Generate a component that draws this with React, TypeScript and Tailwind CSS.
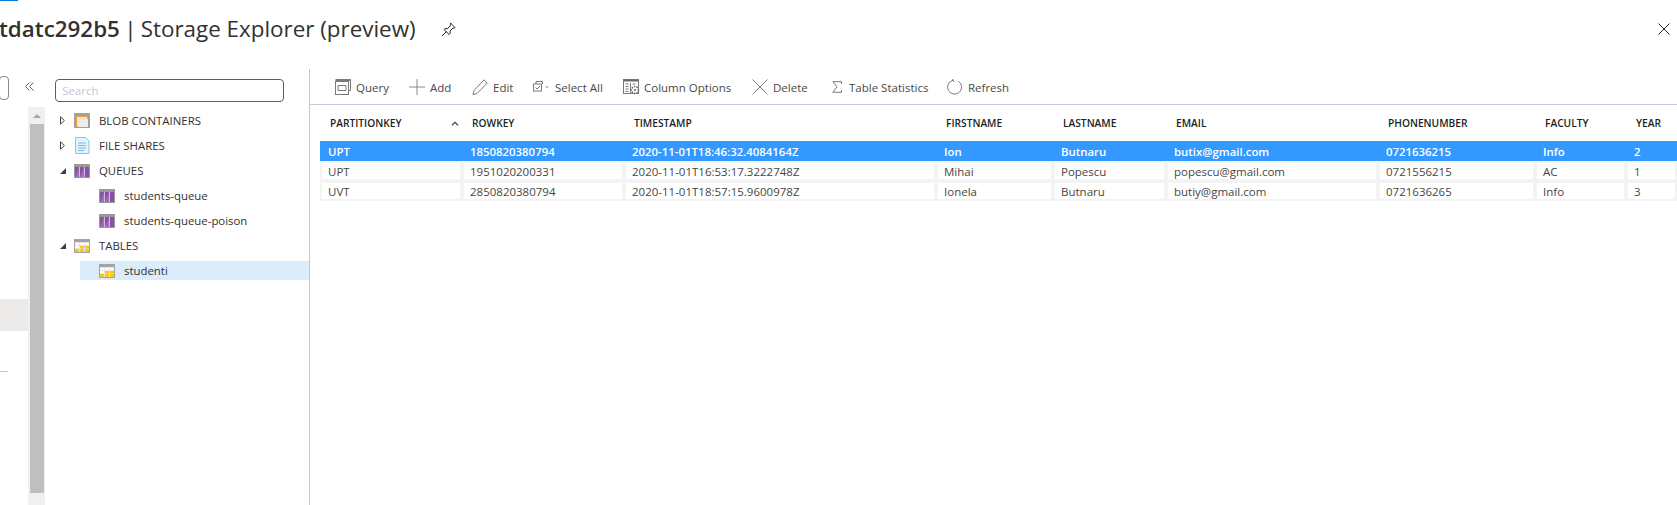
import React from 'react'

const font = "[font-family:'Open_Sans',sans-serif]"

const columns = [
  'PartitionKey',
  'RowKey',
  'Timestamp',
  'FirstName',
  'LastName',
  'Email',
  'PhoneNumber',
  'Faculty',
  'Year',
]

const rows = [
  ['UPT', '1850820380794', '2020-11-01T18:46:32.4084164Z', 'Ion', 'Butnaru', 'butix@gmail.com', '0721636215', 'Info', '2'],
  ['UPT', '1951020200331', '2020-11-01T16:53:17.3222748Z', 'Mihai', 'Popescu', 'popescu@gmail.com', '0721556215', 'AC', '1'],
  ['UVT', '2850820380794', '2020-11-01T18:57:15.9600978Z', 'Ionela', 'Butnaru', 'butiy@gmail.com', '0721636265', 'Info', '3'],
]

const gridCols = 'grid-cols-[142px_162px_312px_117px_113px_212px_157px_91px_51px]'

const BlobIcon = () => (
  <svg width="16" height="16" viewBox="0 0 16 16">
    <rect x="0" y="0" width="16" height="15" fill="#a0a0a0" />
    <rect x="2" y="3" width="12" height="11" fill="#f2a23a" />
    <rect x="3" y="4" width="10" height="9" fill="#fbe3bf" />
    <rect x="4" y="6" width="10" height="8" fill="#ececec" />
  </svg>
)

const FileIcon = () => (
  <svg width="16" height="17" viewBox="0 0 16 17">
    <path d="M1.5.5h10l3.5 3.5v12.5H1.5z" fill="#e3f3fb" stroke="#7fcbea" />
    <path d="M4 6h8M4 8.5h8M4 11h8M4 13.5h6" stroke="#6fbfe6" strokeWidth="1" />
  </svg>
)

const QueueIcon = () => (
  <svg width="16" height="14" viewBox="0 0 16 14">
    <rect x="0" y="0" width="16" height="14" fill="#9a9a9a" />
    <rect x="1" y="3" width="14" height="10" fill="#8a4fa8" />
    <path d="M5.5 3v10M10.5 3v10" stroke="#c9c4cc" strokeWidth="1" />
    <path d="M1 13 5 3v10zM6 13l4-10v10z" fill="#a678bf" opacity="0.7" />
  </svg>
)

const TableIcon = () => (
  <svg width="16" height="14" viewBox="0 0 16 14">
    <rect x="0" y="0" width="16" height="14" fill="#a3a3a3" />
    <rect x="1" y="3" width="14" height="10" fill="#e6e6e6" />
    <path d="M1 4h4v2h-4zM6 4h4v2h-4zM11 4h4v2h-4zM1 7h4v2h-4z" fill="#ffffff" />
    <path d="M1 10h4v3h-4zM6 7h4v2.5h-4zM11 7h4v2.5h-4zM6 10h4v3h-4zM11 10h4v3h-4z" fill="#f7c81e" />
  </svg>
)

const Caret = ({ open }: { open?: boolean }) =>
  open ? (
    <svg width="6" height="6" viewBox="0 0 6 6">
      <path d="M6 0v6H0z" fill="#404040" />
    </svg>
  ) : (
    <svg width="5" height="9" viewBox="0 0 5 9">
      <path d="M.5.8 4.4 4.5.5 8.2z" fill="#fff" stroke="#404040" />
    </svg>
  )

const TreeRoot = ({ label, open, icon }: { label: string; open?: boolean; icon: React.ReactNode }) => (
  <div className="flex h-[25px] items-center pl-[15px]">
    <span className="flex w-[14px] items-center">
      <Caret open={open} />
    </span>
    <span className="flex w-[25px] items-center">{icon}</span>
    <span className="text-[11.4px] text-[#323130]">{label}</span>
  </div>
)

const TreeLeaf = ({ label, selected, icon }: { label: string; selected?: boolean; icon: React.ReactNode }) => (
  <div className="flex h-[25px] items-center pl-[35px]">
    <div className={`flex h-[19px] flex-1 items-center pl-[19px] ${selected ? 'bg-[#daedfd]' : ''}`}>
      <span className="flex w-[25px] items-center">{icon}</span>
      <span className="text-[11.4px] text-[#323130]">{label}</span>
    </div>
  </div>
)

const ToolButton = ({ icon, label, className }: { icon: React.ReactNode; label: string; className: string }) => (
  <div className={`flex items-center ${className}`}>
    {icon}
    <span className="text-[11.5px] text-[#4a4846]">{label}</span>
  </div>
)

const stroke = { fill: 'none', stroke: '#7a7a7a', strokeWidth: 1 }

const App = () => {
  return (
    <div className={`flex h-[505px] w-full flex-col overflow-hidden bg-white ${font}`}>
      <div className="h-px w-[18px] bg-[#0078d4]" />
      <div className="flex h-[68px] shrink-0 items-start">
        <div className="-ml-px mt-[12px] whitespace-nowrap text-[22.4px] leading-[32px] text-[#323130]">
          <span className="font-semibold">tdatc292b5</span>
          <span className="[word-spacing:-1.6px]"> | </span>Storage Explorer (preview)
        </div>
        <svg className="ml-[25px] mt-[21px]" width="15" height="15" viewBox="0 0 15 15">
          <path d="M9.5 1 14 5.5l-1 .7-1-.2-3 3 .2 2.5-1 1L3 7.500l1-1 2.500.2 3-3-.2-1zM5.500 9.500 1 14" fill="none" stroke="#252423" />
        </svg>
        <svg className="ml-auto mr-[7px] mt-[22px]" width="12" height="12" viewBox="0 0 12 12">
          <path d="M.5.5l11 11M11.5.5l-11 11" stroke="#252423" />
        </svg>
      </div>

      <div className="flex min-h-0 flex-1">
        <aside className="flex w-[310px] shrink-0 border-r border-[#c8c6c4]">
          <div className="w-[28px] shrink-0">
            <div className="-ml-px mt-[7px] h-[24px] w-[10px] rounded-sm border border-[#8a8886]" />
            <div className="mt-[199px] h-[32px] bg-[#edebe9]" />
            <div className="mt-[40px] h-px w-[8px] bg-[#c8c6c4]" />
          </div>
          <div className="w-[17px] shrink-0">
            <div className="h-[38px] pt-[13px]">
              <svg className="-ml-[3px]" width="9" height="9" viewBox="0 0 9 9">
                <path d="M4.5.5.5 4.5l4 4M8.5.5l-4 4 4 4" fill="none" stroke="#605e5c" />
              </svg>
            </div>
            <div className="flex h-[398px] flex-col bg-[#f0f0f0] pl-[2px] pr-[1px]">
              <div className="flex h-[17px] items-center justify-center">
                <div className="h-0 w-0 border-x-[4px] border-b-[4px] border-x-transparent border-b-[#a6a6a6]" />
              </div>
              <div className="h-[369px] bg-[#bfbfbf]" />
            </div>
          </div>
          <div className="min-w-0 flex-1">
            <div className="ml-[10px] mr-[25px] mt-[10px] flex h-[23px] items-center rounded-sm border border-[#605e5c] px-[6px] text-[11.6px] text-[#c8c6d8]">
              Search
            </div>
            <div className="mt-[6px]">
              <TreeRoot label="BLOB CONTAINERS" icon={<BlobIcon />} />
              <TreeRoot label="FILE SHARES" icon={<FileIcon />} />
              <TreeRoot label="QUEUES" open icon={<QueueIcon />} />
              <TreeLeaf label="students-queue" icon={<QueueIcon />} />
              <TreeLeaf label="students-queue-poison" icon={<QueueIcon />} />
              <TreeRoot label="TABLES" open icon={<TableIcon />} />
              <TreeLeaf label="studenti" selected icon={<TableIcon />} />
            </div>
          </div>
        </aside>

        <main className="min-w-0 flex-1">
          <div className="flex h-[36px] items-center border-b border-[#cdc9e0] pl-[25px] pt-[2px]">
            <ToolButton
              className="w-[74px] gap-[5px]"
              label="Query"
              icon={
                <svg className="-mt-[2px]" width="16" height="16" viewBox="0 0 16 16">
                  <path d="M2.5 2.5V.5h13v11h-2" {...stroke} />
                  <rect x=".5" y="2.5" width="13" height="13" {...stroke} />
                  <path d="M3 6.5h8v5H3z" {...stroke} />
                  <path d="M.5 1h15" stroke="#7a7a7a" strokeWidth="2" />
                </svg>
              }
            />
            <ToolButton
              className="w-[63px] gap-[5px]"
              label="Add"
              icon={
                <svg className="-mt-[2px]" width="16" height="16" viewBox="0 0 16 16">
                  <path d="M8 0v16M0 8h16" stroke="#8a8886" strokeWidth="1" />
                </svg>
              }
            />
            <ToolButton
              className="w-[61px] gap-[5px]"
              label="Edit"
              icon={
                <svg className="-mt-[2px]" width="16" height="16" viewBox="0 0 16 16">
                  <path d="M12 .8 15.2 4 5 14.5 1 15.5l1-4z" {...stroke} />
                </svg>
              }
            />
            <ToolButton
              className="w-[90px]"
              label="Select All"
              icon={
                <svg className="-mt-[2px] mr-[6px]" width="16" height="12" viewBox="0 0 16 12">
                  <path d="M3 3V.5h6.5V3" {...stroke} />
                  <rect x=".5" y="3" width="8" height="7" {...stroke} />
                  <path d="m2.5 6.500 1.500 1.500 3-3" {...stroke} />
                  <path d="m12.5 5.500 3 0-1.500 1.500z" fill="#7a7a7a" />
                </svg>
              }
            />
            <ToolButton
              className="w-[129px] gap-[4px]"
              label="Column Options"
              icon={
                <svg className="-mt-[2px]" width="17" height="16" viewBox="0 0 17 16">
                  <rect x=".5" y=".5" width="15" height="14" {...stroke} />
                  <path d="M.5 1.5h15" stroke="#6a6a6a" strokeWidth="2" />
                  <path d="M2.5 5h3M2.5 7.500h3M2.5 10h3M2.5 12.500h3M7.500 4v10M9.500 5h3" stroke="#7a7a7a" />
                  <circle cx="12" cy="11" r="3.5" fill="#fff" stroke="#6a6a6a" strokeWidth="1.5" strokeDasharray="1.5 1" />
                  <circle cx="12" cy="11" r="1" fill="#6a6a6a" />
                </svg>
              }
            />
            <ToolButton
              className="w-[80px] gap-[5px]"
              label="Delete"
              icon={
                <svg className="-mt-[2px]" width="16" height="16" viewBox="0 0 16 16">
                  <path d="M.5.5l15 15M15.5.5l-15 15" stroke="#7a7a7a" />
                </svg>
              }
            />
            <ToolButton
              className="w-[115px] gap-[7px]"
              label="Table Statistics"
              icon={
                <svg className="-mt-[2px]" width="10" height="12" viewBox="0 0 10 12">
                  <path d="M9.5 3V.7H.8L5 5.800.8 11.300h8.700V9" {...stroke} />
                </svg>
              }
            />
            <ToolButton
              className="gap-[5px]"
              label="Refresh"
              icon={
                <svg className="-mt-[2px]" width="16" height="16" viewBox="0 0 16 16">
                  <path d="M11.5 2.300A7 7 0 1 1 6 1.300" {...stroke} />
                  <path d="M5.5 0l1.500 3" {...stroke} />
                </svg>
              }
            />
          </div>

          <div className="pl-[10px]">
            <div className={`grid h-[36px] items-center pt-[2px] ${gridCols}`}>
              {columns.map((name, i) => (
                <div key={name} className="flex items-center justify-between pl-[10px] pr-[3px] text-[10.2px] font-semibold uppercase text-[#201f1e]">
                  <span>{name}</span>
                  {i === 0 && (
                    <svg width="8" height="5" viewBox="0 0 8 5">
                      <path d="M1 4.300 4 1.300l3 3" fill="none" stroke="#444" strokeWidth="1.3" />
                    </svg>
                  )}
                </div>
              ))}
            </div>
            {rows.map((row, r) => (
              <div
                key={row[1]}
                className={`grid h-[20px] leading-[18px] ${gridCols} ${r === 0 ? 'bg-[#3399ff] text-[11.4px] font-semibold text-white' : 'bg-[#f3f3f3] text-[11.5px] text-[#484644]'}`}
              >
                {row.map((value, c) => (
                  <div key={c} className={`m-[2px] h-[16px] whitespace-nowrap pl-[6px] ${r === 0 ? '' : 'bg-white'}`}>
                    {value}
                  </div>
                ))}
              </div>
            ))}
          </div>
        </main>
      </div>
    </div>
  )
}

export default App
